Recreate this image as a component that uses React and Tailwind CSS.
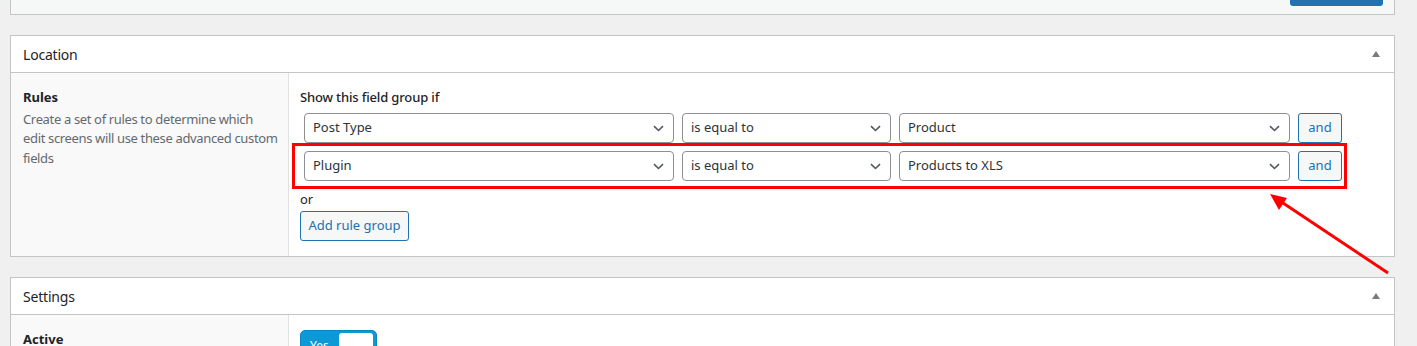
import React from 'react';

const font = { fontFamily: '"Noto Sans", "Open Sans", Arial, sans-serif' };

const Chevron = () => (
  <svg width="11" height="7" viewBox="0 0 11 7" className="shrink-0">
    <path d="M1 1.2 L5.5 5.5 L10 1.2" fill="none" stroke="#50575e" strokeWidth="1.6" />
  </svg>
);

const Select = ({ label, className }) => (
  <div
    className={`h-[30px] flex items-center justify-between pl-[8px] pr-[9px] border border-[#8c8f94] rounded-[4px] bg-white text-[13px] text-[#2c3338] ${className}`}
  >
    <span>{label}</span>
    <Chevron />
  </div>
);

const AndButton = () => (
  <div className="h-[30px] w-[44px] flex items-center justify-center border border-[#2271b1] rounded-[3px] bg-[#f6f7f7] text-[13px] text-[#2271b1]">
    and
  </div>
);

const RuleRow = ({ param, value }) => (
  <div className="flex gap-[8px]">
    <Select label={param} className="w-[370px]" />
    <Select label="is equal to" className="w-[209px]" />
    <Select label={value} className="w-[391px]" />
    <AndButton />
  </div>
);

const Toggle = () => (
  <svg width="8" height="6" viewBox="0 0 8 6">
    <path d="M4 0 L8 6 L0 6 Z" fill="#787c82" />
  </svg>
);

const BoxHeader = ({ title }) => (
  <div className="h-[37px] flex items-center justify-between pl-[12px] pr-[14px] border-b border-[#c3c4c7] bg-white">
    <span className="text-[14px] tracking-[-0.2px] text-[#1d2327]">{title}</span>
    <Toggle />
  </div>
);

export default function App() {
  return (
    <div className="relative w-[1417px] h-[346px] overflow-hidden bg-[#f0f0f1]" style={font}>
      {/* previous box, mostly scrolled away */}
      <div className="ml-[10px] w-[1385px] h-[15px] bg-[#f6f7f7] border-x border-b border-[#c3c4c7] flex justify-end pr-[11px]">
        <div className="h-[6px] w-[93px] bg-[#2271b1] rounded-b-[3px]" />
      </div>

      {/* Location */}
      <div className="mt-[20px] ml-[10px] w-[1385px] border border-[#c3c4c7] bg-white">
        <BoxHeader title="Location" />
        <div className="flex">
          <div className="w-[278px] shrink-0 bg-[#f9f9f9] border-r border-[#e1e1e1] px-[12px] pt-[15px] text-[13px] leading-[19.5px]">
            <div className="font-bold text-[#1d2327]">Rules</div>
            <div className="mt-[2px] text-[#646970] tracking-[-0.35px] whitespace-nowrap">
              Create a set of rules to determine which<br />
              edit screens will use these advanced custom<br />
              fields
            </div>
          </div>
          <div className="flex-1 px-[11px] pt-[15px] pb-[15px] text-[13px] text-[#1d2327]">
            <div className="leading-[18px] font-medium tracking-[-0.15px]">Show this field group if</div>
            <div className="mt-[7px] pl-[4px] flex flex-col gap-[8px]">
              <RuleRow param="Post Type" value="Product" />
              <div className="relative">
                <RuleRow param="Plugin" value="Products to XLS" />
                <div className="absolute left-[-12px] top-[-8px] w-[1055px] h-[46px] border-[3px] border-[#ff0000]" />
              </div>
            </div>
            <div className="mt-[9px] leading-[18px]">or</div>
            <div className="mt-[3px] h-[30px] w-[109px] flex items-center justify-center border border-[#2271b1] rounded-[3px] bg-[#f6f7f7] text-[13px] text-[#2271b1]">
              Add rule group
            </div>
          </div>
        </div>
      </div>

      {/* Settings */}
      <div className="mt-[20px] ml-[10px] w-[1385px] border border-[#c3c4c7] bg-white">
        <BoxHeader title="Settings" />
        <div className="flex h-[60px]">
          <div className="w-[278px] shrink-0 bg-[#f9f9f9] border-r border-[#e1e1e1] px-[12px] pt-[15px] text-[13px] leading-[19.5px]">
            <div className="font-bold text-[#1d2327]">Active</div>
          </div>
          <div className="flex-1 px-[11px] pt-[15px]">
            <div className="w-[77px] h-[28px] rounded-[5px] bg-[#0d99d5] border border-[#0a88be] flex items-start justify-between pl-[9px] pr-[3px] pt-[2px]">
              <span className="text-[12px] leading-[26px] text-white">Yes</span>
              <div className="w-[34px] h-[22px] bg-white rounded-[3px]" />
            </div>
          </div>
        </div>
      </div>

      {/* annotation arrow */}
      <svg className="absolute left-0 top-0 pointer-events-none" width="1417" height="346">
        <line x1="1388" y1="273" x2="1280" y2="201" stroke="#ff0000" strokeWidth="3" />
        <path d="M1270 194 L1287 198 L1279 210 Z" fill="#ff0000" />
      </svg>
    </div>
  );
}
